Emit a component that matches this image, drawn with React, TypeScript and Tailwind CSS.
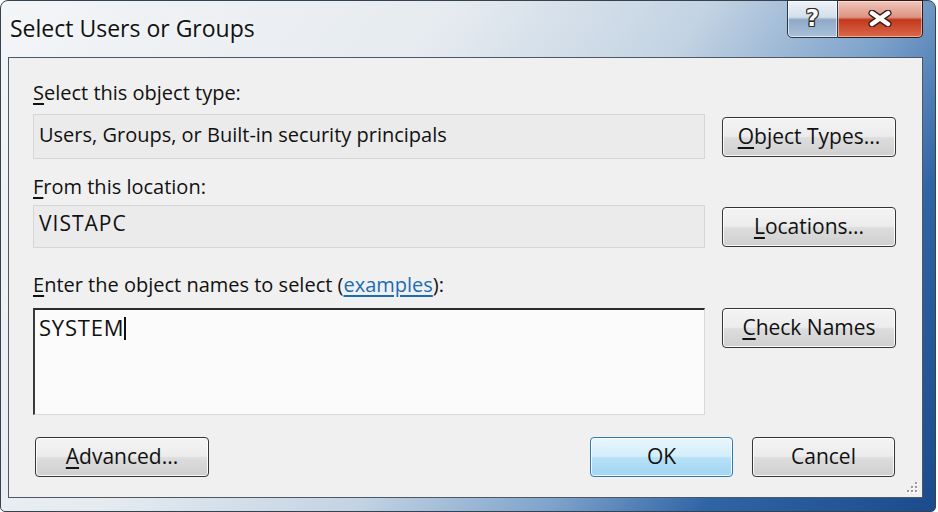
import React from "react";

function Btn({
  children,
  className = "",
  primary = false,
}: {
  children: React.ReactNode;
  className?: string;
  primary?: boolean;
}) {
  return (
    <div
      className={
        "h-[40px] rounded-[4px] border flex items-center justify-center text-[21px] leading-none text-[#111] shadow-[inset_0_0_0_1px_rgba(255,255,255,0.85)] " +
        (primary
          ? "border-[#2f7bb0] bg-[linear-gradient(180deg,#e8f6fe_0%,#d3eefb_48%,#b6e1f8_52%,#a1d5f2_100%)] "
          : "border-[#363636] bg-[linear-gradient(180deg,#f4f4f4_0%,#ececec_48%,#dddddd_52%,#cfcfcf_100%)] ") +
        className
      }
    >
      <span className="-mt-[1px]">{children}</span>
    </div>
  );
}

export default function App() {
  return (
    <div className="w-[938px] h-[512px] bg-white overflow-hidden font-['Open_Sans','Noto_Sans',sans-serif] text-[#111]">
      <div className="w-[936px] h-[512px] rounded-t-[8px] rounded-b-[5px] border border-[#35424f] bg-[linear-gradient(125deg,#f3f5f7_0%,#e6ebf0_35%,#c3d3e3_55%,#7ea3cb_70%,#2f64a5_82%,#1b4b8d_100%)] flex flex-col">
        {/* Title bar */}
        <div className="h-[56px] flex items-start shrink-0">
          <div className="pl-[9px] pt-[12px] text-[23px] leading-[30px] text-[#111] [text-shadow:0_0_6px_rgba(255,255,255,0.9)]">
            Select Users or Groups
          </div>
          <div className="ml-auto mr-[12px] -mt-px flex h-[38px]">
            <div className="w-[51px] h-full rounded-bl-[5px] border border-[#2a3948] bg-[linear-gradient(180deg,#eef3f8_0%,#d3dfea_45%,#8fa9c6_52%,#aac1d9_100%)] shadow-[inset_0_0_0_1px_rgba(255,255,255,0.6)] flex items-center justify-center">
              <span className="font-['DejaVu_Sans',sans-serif] font-bold text-[23px] leading-none text-white -mt-[2px] [text-shadow:1px_0_0_#2b2b2b,-1px_0_0_#2b2b2b,0_1px_0_#2b2b2b,0_-1px_0_#2b2b2b,1px_1px_0_#2b2b2b,-1px_-1px_0_#2b2b2b,1px_-1px_0_#2b2b2b,-1px_1px_0_#2b2b2b]">
                ?
              </span>
            </div>
            <div className="w-[85px] h-full rounded-br-[5px] border border-l-0 border-[#3a1810] bg-[linear-gradient(180deg,#efc6bb_0%,#dc9482_45%,#c3381b_52%,#d9694c_100%)] shadow-[inset_0_0_0_1px_rgba(255,255,255,0.45)] flex items-center justify-center">
              <svg width="24" height="17" viewBox="0 0 24 17" className="-mt-[2px]">
                <g strokeLinecap="round">
                  <line x1="4" y1="3" x2="20" y2="14" stroke="#3a1a14" strokeWidth="7" />
                  <line x1="20" y1="3" x2="4" y2="14" stroke="#3a1a14" strokeWidth="7" />
                  <line x1="4" y1="3" x2="20" y2="14" stroke="#ffffff" strokeWidth="4.5" />
                  <line x1="20" y1="3" x2="4" y2="14" stroke="#ffffff" strokeWidth="4.5" />
                </g>
              </svg>
            </div>
          </div>
        </div>

        {/* Client panel */}
        <div className="relative ml-[7px] mr-[12px] h-[441px] shrink-0 border border-[#4d5864] bg-[#f0f0f0] pl-[24px] pr-[26px] pt-[23px] flex flex-col">
          <div className="h-[24px] leading-[24px] text-[20px]">
            <u className="underline-offset-[3px]">S</u>elect this object type:
          </div>
          <div className="mt-[9px] flex items-center gap-[17px]">
            <div className="flex-1 h-[45px] border border-[#d6d6d6] bg-[#ebebeb] pl-[5px] pb-[4px] flex items-center text-[20px]">
              Users, Groups, or Built-in security principals
            </div>
            <Btn className="w-[174px]">
              <u className="underline-offset-[3px]">O</u>bject Types...
            </Btn>
          </div>

          <div className="mt-[16px] h-[24px] leading-[24px] text-[20px]">
            <u className="underline-offset-[3px]">F</u>rom this location:
          </div>
          <div className="mt-[6px] flex items-center gap-[17px]">
            <div className="flex-1 h-[43px] border border-[#d6d6d6] bg-[#ebebeb] pl-[5px] pb-[5px] flex items-center text-[21px] tracking-[1px]">
              VISTAPC
            </div>
            <Btn className="w-[174px]">
              <u className="underline-offset-[3px]">L</u>ocations...
            </Btn>
          </div>

          <div className="mt-[25px] h-[24px] leading-[24px] text-[20px]">
            <u className="underline-offset-[3px]">E</u>nter the object names to select (
            <span className="text-[#1b6db3] underline underline-offset-[3px]">examples</span>):
          </div>
          <div className="mt-[11px] flex items-start gap-[17px]">
            <div className="flex-1 h-[107px] border-t-2 border-l-2 border-r border-b border-t-[#2c2c2c] border-l-[#3a3a3a] border-r-[#d8d8d8] border-b-[#d8d8d8] bg-[#fbfbfb] pl-[4px] pt-[3px] text-[22px] leading-[28px]">
              <span className="tracking-[0.8px]">SYSTEM</span>
              <span className="inline-block align-[-4px] w-[2px] h-[23px] bg-[#111]" />
            </div>
            <Btn className="w-[174px]">
              <u className="underline-offset-[3px]">C</u>heck Names
            </Btn>
          </div>

          <div className="mt-[22px] flex items-center">
            <Btn className="ml-[2px] w-[174px]">
              <u className="underline-offset-[3px]">A</u>dvanced...
            </Btn>
            <Btn primary className="ml-auto w-[143px]">
              OK
            </Btn>
            <Btn className="ml-[19px] mr-[1px] w-[143px]">Cancel</Btn>
          </div>

          <svg
            className="absolute right-[4px] bottom-[3px]"
            width="14"
            height="14"
            viewBox="0 0 14 14"
          >
            {[
              [11, 2],
              [7, 6],
              [11, 6],
              [3, 10],
              [7, 10],
              [11, 10],
            ].map(([x, y], i) => (
              <g key={i}>
                <rect x={x + 1} y={y + 1} width="2" height="2" fill="#ffffff" />
                <rect x={x} y={y} width="2" height="2" fill="#9a9a9a" />
              </g>
            ))}
          </svg>
        </div>
      </div>
    </div>
  );
}
